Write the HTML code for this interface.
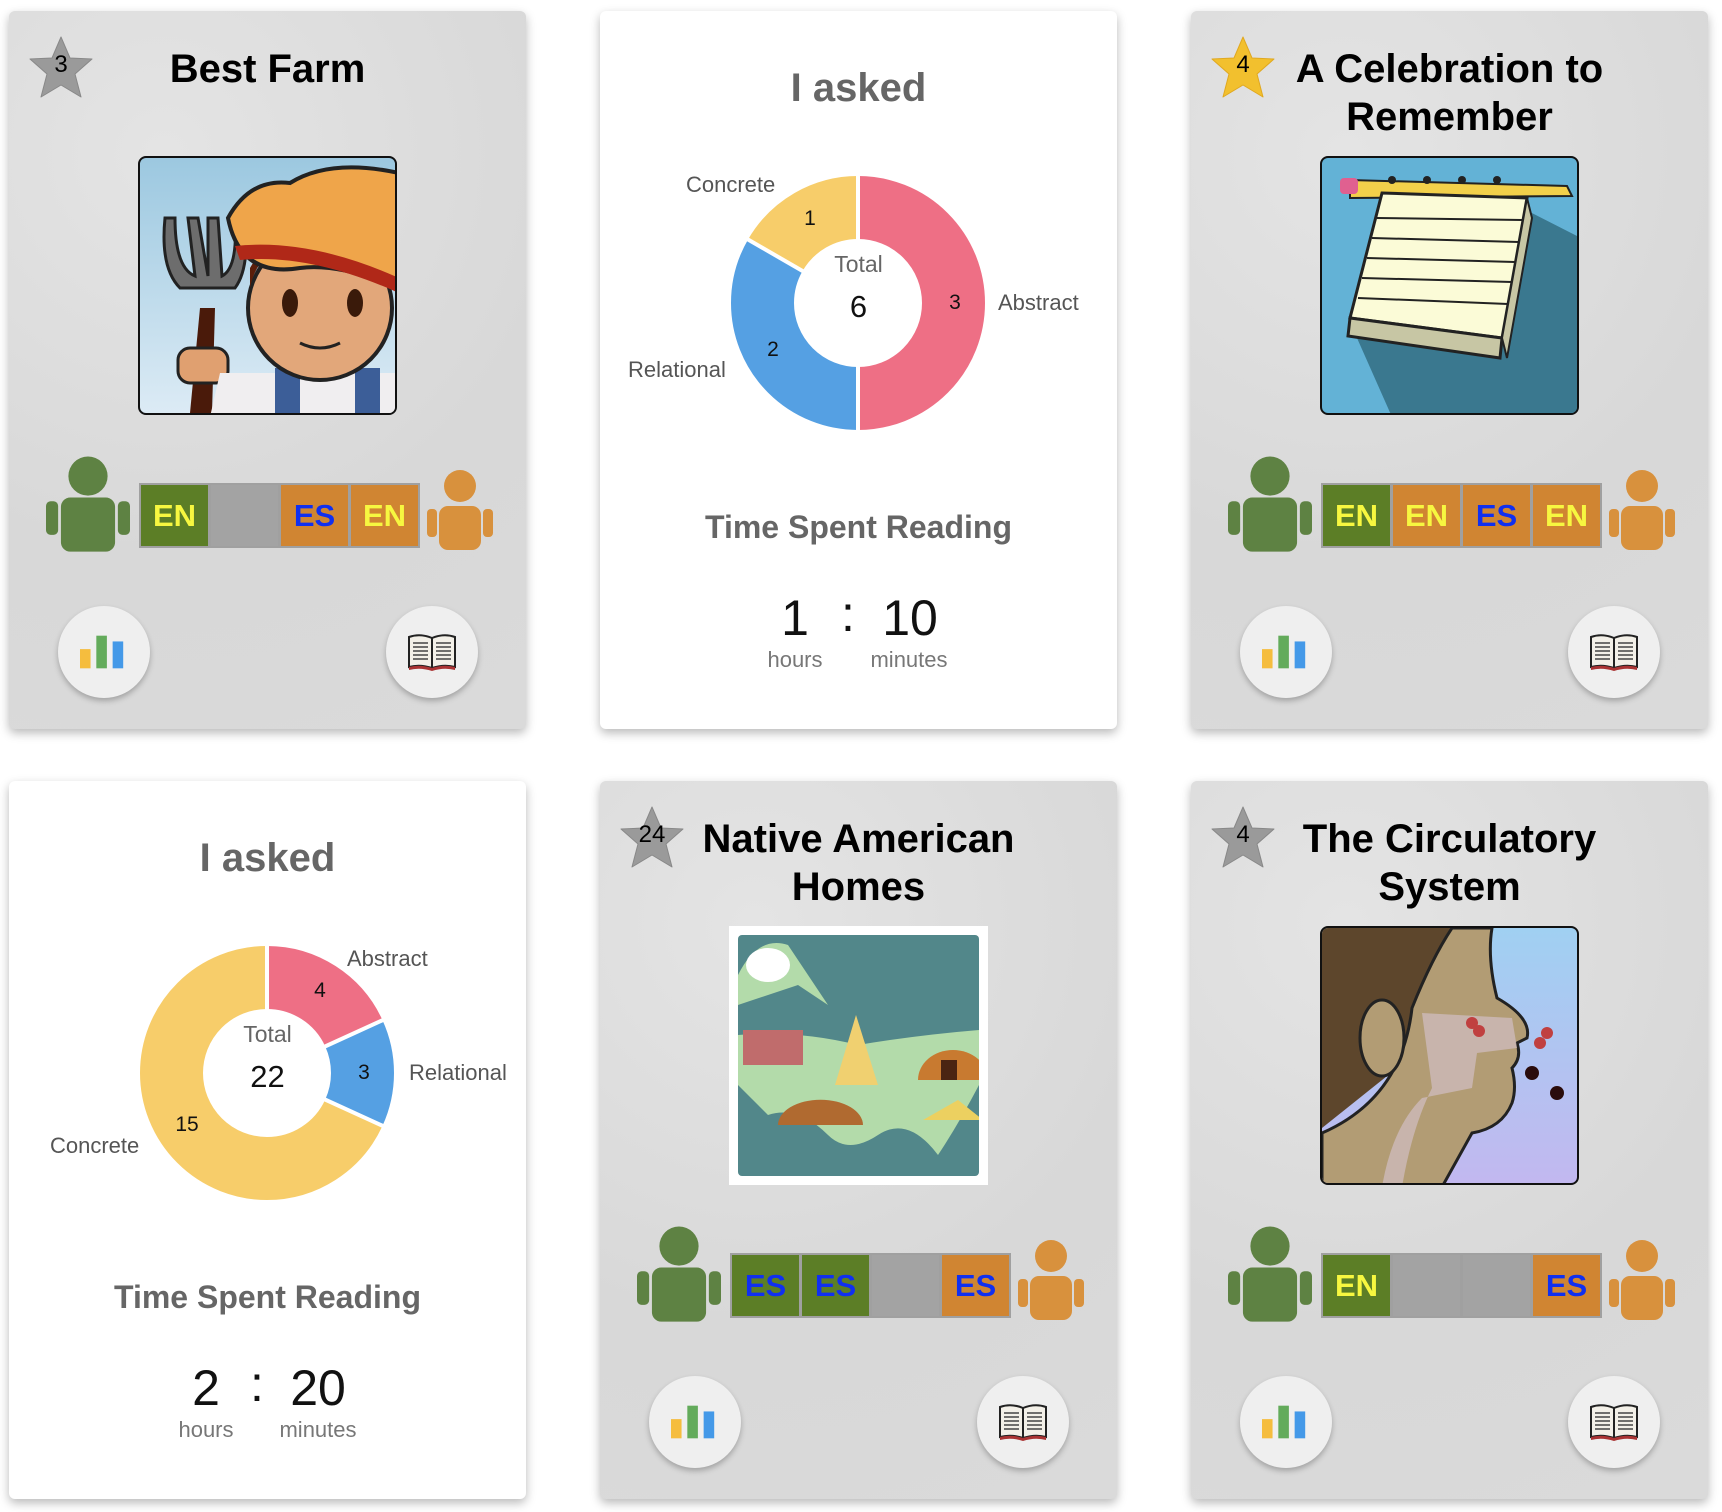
<!DOCTYPE html>
<html><head><meta charset="utf-8">
<style>
*{margin:0;padding:0;box-sizing:border-box}
body{width:1722px;height:1512px;background:#fff;position:relative;overflow:hidden;font-family:"Liberation Sans",Arial,sans-serif}
.card{position:absolute;width:517px;height:718px;border-radius:6px;box-shadow:0 4px 10px rgba(0,0,0,.28)}
.g{background:#dcdcdc;background-image:radial-gradient(circle at 30% 20%,#e4e4e4 0,#d8d8d8 60%,#dadada 100%)}
.w{background:#fff}
.star{position:absolute;left:19px;top:24px;width:66px;height:66px}
.title{position:absolute;left:0;width:517px;text-align:center;font-weight:bold;font-size:40px;color:#000;line-height:48px}
.img{position:absolute;left:129px;top:145px;width:259px;height:259px;border-radius:8px;overflow:hidden;border:2px solid #111}
.langs{position:absolute;left:130px;top:472px;display:flex;background:#a0a0a0;padding:2px;gap:3px}
.lb{width:67px;height:61px;font-weight:bold;font-size:31px;display:flex;align-items:center;justify-content:center}
.gr{background:#5c7e26}.or{background:#d08532}.gy{background:#a3a3a3}
.ye{color:#f7f740}.bl{color:#1030f0}
.pg{position:absolute;left:37px;top:444px}
.po{position:absolute;left:418px;top:459px}
.btn{position:absolute;top:595px;width:92px;height:92px;border-radius:50%;background:#efefef;box-shadow:0 3px 6px rgba(0,0,0,.25);display:flex;align-items:center;justify-content:center}
.h1{position:absolute;left:0;width:517px;text-align:center;top:55px;font-size:40px;font-weight:bold;color:#666}
.lbl{position:absolute;font-size:22px;color:#555;white-space:nowrap}
.num{position:absolute;font-size:21px;color:#111;transform:translate(-50%,-50%)}
.tsr{position:absolute;left:0;width:517px;text-align:center;top:498px;font-size:32px;font-weight:bold;color:#666}
.big{position:absolute;top:578px;font-size:50px;color:#111;transform:translateX(-50%)}
.sm{position:absolute;top:636px;font-size:22px;color:#777;transform:translateX(-50%)}
</style></head><body>

<svg width="0" height="0" style="position:absolute">
<defs>
<symbol id="pg" viewBox="0 0 90 104"><circle cx="45" cy="21" r="21" fill="#5e8243"/><rect x="16" y="44" width="58" height="58" rx="10" fill="#5e8243"/><rect x="0" y="48" width="13" height="36" rx="5" fill="#5e8243"/><rect x="77" y="48" width="13" height="36" rx="5" fill="#5e8243"/></symbol>
<symbol id="po" viewBox="0 0 66 80"><circle cx="33" cy="16" r="16" fill="#d8913d"/><rect x="12" y="36" width="42" height="44" rx="9" fill="#d8913d"/><rect x="0" y="39" width="10" height="28" rx="4" fill="#d8913d"/><rect x="56" y="39" width="10" height="28" rx="4" fill="#d8913d"/></symbol>
<symbol id="bars" viewBox="0 0 50 34"><rect x="0" y="14" width="11" height="20" fill="#f5bd3e"/><rect x="17" y="0" width="11" height="34" fill="#63ab5b"/><rect x="34" y="6" width="11" height="28" fill="#4499e8"/></symbol>
<symbol id="book" viewBox="0 0 50 38"><path d="M2 4 Q13 0 25 5 Q37 0 48 4 L48 34 Q37 31 25 35 Q13 31 2 34 Z" fill="#f3f0e8" stroke="#222" stroke-width="2"/><path d="M25 5 L25 35" stroke="#222" stroke-width="2"/><g stroke="#444" stroke-width="1.6"><path d="M6 10h15M6 14h15M6 18h15M6 22h15M6 26h15M29 10h15M29 14h15M29 18h15M29 22h15M29 26h15"/></g><path d="M2 34 Q13 31 25 35 Q37 31 48 34 L48 37 Q37 34 25 38 Q13 34 2 37Z" fill="#a33"/></symbol>
<symbol id="star" viewBox="0 0 66 66"><path d="M33 2 L42 23 L64 24 L47 39 L53 62 L33 50 L13 62 L19 39 L2 24 L24 23 Z" fill="#9a9a9a" stroke="#888" stroke-width="1" stroke-linejoin="round"/></symbol>
<symbol id="stary" viewBox="0 0 66 66"><path d="M33 2 L42 23 L64 24 L47 39 L53 62 L33 50 L13 62 L19 39 L2 24 L24 23 Z" fill="#f2c02e" stroke="#e0a820" stroke-width="1" stroke-linejoin="round"/></symbol>
</defs></svg>

<!-- Card 1 -->
<div class="card g" style="left:9px;top:11px">
  <svg class="star"><use href="#star"/></svg>
  <div style="position:absolute;left:19px;top:40px;width:66px;text-align:center;font-size:24px">3</div>
  <div class="title" style="top:34px">Best Farm</div>
  <div class="img" style="background:linear-gradient(#9cc8e0,#dcebf5)">
    <svg width="259" height="259" viewBox="0 0 259 259">
      <path d="M50 255 L60 150 L75 150 L72 255Z" fill="#4a1a0a"/>
      <path d="M25 60 Q20 110 40 130 L95 130 Q110 110 105 60 L95 60 Q98 110 82 118 L78 60 L68 60 L68 118 L58 60 L48 60 L55 118 Q35 110 35 60Z" fill="#6d6d6d" stroke="#222" stroke-width="3"/>
      <rect x="38" y="190" width="50" height="35" rx="12" fill="#e0a070" stroke="#222" stroke-width="3"/>
      <path d="M70 259 L80 215 L259 215 L259 259Z" fill="#f0eef0"/>
      <rect x="135" y="210" width="25" height="49" fill="#3c5e98"/><rect x="215" y="210" width="25" height="49" fill="#3c5e98"/>
      <circle cx="180" cy="150" r="72" fill="#e2a77a" stroke="#222" stroke-width="4"/>
      <path d="M110 130 Q120 80 180 85 L259 90 L259 60 Q150 40 110 110Z" fill="#5a1e0a"/>
      <ellipse cx="150" cy="145" rx="8" ry="14" fill="#3a1a0a"/><ellipse cx="215" cy="145" rx="8" ry="14" fill="#3a1a0a"/>
      <path d="M160 185 Q180 195 200 185" stroke="#222" stroke-width="3" fill="none"/>
      <path d="M88 60 Q110 20 150 25 Q190 0 259 15 L259 130 Q200 105 160 110 Q100 120 88 60Z" fill="#efa54a" stroke="#222" stroke-width="4"/>
      <path d="M95 88 Q170 80 259 120 L259 135 Q170 95 100 102Z" fill="#b02818"/>
    </svg>
  </div>
  <div class="langs"><div class="lb gr ye">EN</div><div class="lb gy"></div><div class="lb or bl">ES</div><div class="lb or ye">EN</div></div>
  <svg class="pg" width="84" height="100"><use href="#pg"/></svg>
  <svg class="po" width="66" height="80"><use href="#po"/></svg>
  <div class="btn" style="left:49px"><svg width="48" height="36"><use href="#bars"/></svg></div>
  <div class="btn" style="left:377px"><svg width="50" height="38"><use href="#book"/></svg></div>
</div>

<!-- Card 2 chart -->
<div class="card w" style="left:600px;top:11px">
  <div class="h1">I asked</div>
  <svg style="position:absolute;left:0;top:0" width="517" height="460">
    <g transform="translate(258,292) rotate(-90)">
      <circle r="95.5" fill="none" stroke="#ee6f85" stroke-width="63" stroke-dasharray="300 300.04"/>
      <circle r="95.5" fill="none" stroke="#55a0e3" stroke-width="63" stroke-dasharray="0 300 200 100.04"/>
      <circle r="95.5" fill="none" stroke="#f7cd6a" stroke-width="63" stroke-dasharray="0 500 100.04 0"/>
    </g>
    <g transform="translate(258,292)" stroke="#fff" stroke-width="4"><line x1="0" y1="0" x2="0" y2="-130"/><line x1="0" y1="0" x2="0" y2="130"/><line x1="0" y1="0" x2="-112.6" y2="-65"/></g>
    <circle cx="258" cy="292" r="63" fill="#fff"/>
  </svg>
  <div class="lbl" style="left:86px;top:161px">Concrete</div>
  <div class="lbl" style="left:398px;top:279px">Abstract</div>
  <div class="lbl" style="left:28px;top:346px">Relational</div>
  <div class="num" style="left:210px;top:208px">1</div>
  <div class="num" style="left:355px;top:292px">3</div>
  <div class="num" style="left:173px;top:339px">2</div>
  <div class="lbl" style="left:0;width:517px;text-align:center;top:240px;color:#666;font-size:23px">Total</div>
  <div class="lbl" style="left:0;width:517px;text-align:center;top:278px;color:#111;font-size:31px">6</div>
  <div class="tsr">Time Spent Reading</div>
  <div class="big" style="left:195px">1</div><div class="big" style="left:248px;top:574px">:</div><div class="big" style="left:310px">10</div>
  <div class="sm" style="left:195px">hours</div><div class="sm" style="left:309px">minutes</div>
</div>

<!-- Card 3 -->
<div class="card g" style="left:1191px;top:11px">
  <svg class="star"><use href="#stary"/></svg>
  <div style="position:absolute;left:19px;top:40px;width:66px;text-align:center;font-size:24px">4</div>
  <div class="title" style="top:34px">A Celebration to<br>Remember</div>
  <div class="img" style="background:#63b2d6">
    <svg width="259" height="259" viewBox="0 0 259 259">
      <path d="M35 180 L70 259 L259 259 L259 80 L200 50 L185 180Z" fill="#3a788f"/>
      <path d="M28 22 L245 28 L250 38 L28 40Z" fill="#f2d04a" stroke="#222" stroke-width="2"/>
      <rect x="18" y="20" width="18" height="16" rx="4" fill="#e06090"/>
      <path d="M60 35 L205 40 L180 180 L28 160Z" fill="#fbfbd7" stroke="#222" stroke-width="3"/>
      <path d="M28 160 L180 180 L178 200 L26 178Z" fill="#c7c6a4" stroke="#222" stroke-width="3"/>
      <path d="M205 40 L210 60 L185 200 L180 180Z" fill="#c7c6a4" stroke="#222" stroke-width="2"/>
      <g stroke="#222" stroke-width="2"><path d="M55 60 L200 62M50 80 L197 84M45 100 L193 104M40 120 L190 124M36 140 L186 146"/></g>
      <g fill="#222"><circle cx="70" cy="22" r="4"/><circle cx="105" cy="22" r="4"/><circle cx="140" cy="22" r="4"/><circle cx="175" cy="22" r="4"/></g>
    </svg>
  </div>
  <div class="langs"><div class="lb gr ye">EN</div><div class="lb or ye">EN</div><div class="lb or bl">ES</div><div class="lb or ye">EN</div></div>
  <svg class="pg" width="84" height="100"><use href="#pg"/></svg>
  <svg class="po" width="66" height="80"><use href="#po"/></svg>
  <div class="btn" style="left:49px"><svg width="48" height="36"><use href="#bars"/></svg></div>
  <div class="btn" style="left:377px"><svg width="50" height="38"><use href="#book"/></svg></div>
</div>

<!-- Card 4 chart -->
<div class="card w" style="left:9px;top:781px">
  <div class="h1">I asked</div>
  <svg style="position:absolute;left:0;top:0" width="517" height="460">
    <g transform="translate(258,292) rotate(-90)">
      <circle r="95.5" fill="none" stroke="#ee6f85" stroke-width="63" stroke-dasharray="109.1 490.94"/>
      <circle r="95.5" fill="none" stroke="#55a0e3" stroke-width="63" stroke-dasharray="0 109.1 81.8 409.14"/>
      <circle r="95.5" fill="none" stroke="#f7cd6a" stroke-width="63" stroke-dasharray="0 190.9 409.14 0"/>
    </g>
    <g transform="translate(258,292)" stroke="#fff" stroke-width="4"><line x1="0" y1="0" x2="0" y2="-130"/><line x1="0" y1="0" x2="118.2" y2="-54"/><line x1="0" y1="0" x2="118.2" y2="54"/></g>
    <circle cx="258" cy="292" r="63" fill="#fff"/>
  </svg>
  <div class="lbl" style="left:338px;top:165px">Abstract</div>
  <div class="lbl" style="left:400px;top:279px">Relational</div>
  <div class="lbl" style="left:41px;top:352px">Concrete</div>
  <div class="num" style="left:311px;top:210px">4</div>
  <div class="num" style="left:355px;top:292px">3</div>
  <div class="num" style="left:178px;top:344px">15</div>
  <div class="lbl" style="left:0;width:517px;text-align:center;top:240px;color:#666;font-size:23px">Total</div>
  <div class="lbl" style="left:0;width:517px;text-align:center;top:278px;color:#111;font-size:31px">22</div>
  <div class="tsr">Time Spent Reading</div>
  <div class="big" style="left:197px">2</div><div class="big" style="left:248px;top:574px">:</div><div class="big" style="left:309px">20</div>
  <div class="sm" style="left:197px">hours</div><div class="sm" style="left:309px">minutes</div>
</div>

<!-- Card 5 -->
<div class="card g" style="left:600px;top:781px">
  <svg class="star"><use href="#star"/></svg>
  <div style="position:absolute;left:19px;top:40px;width:66px;text-align:center;font-size:24px">24</div>
  <div class="title" style="top:34px">Native American<br>Homes</div>
  <div class="img" style="background:#fff;border:none;border-radius:0;padding:9px">
    <svg width="241" height="241" viewBox="0 0 241 241">
      <rect x="0" y="0" width="241" height="241" rx="4" fill="#52878a"/>
      <path d="M0 100 Q60 95 120 110 Q180 100 241 95 L241 150 Q220 190 200 220 Q170 180 140 200 Q110 220 90 200 Q60 170 30 180 Q10 160 0 150Z" fill="#b3dbaa"/>
      <path d="M0 40 Q20 0 50 10 Q70 40 90 70 L60 50 Q30 60 0 70Z" fill="#b3dbaa"/>
      <ellipse cx="30" cy="30" rx="22" ry="17" fill="#fff"/>
      <rect x="5" y="95" width="60" height="35" fill="#c06c6c"/>
      <path d="M118 80 L97 150 L140 150Z" fill="#f0d070"/>
      <path d="M180 145 A35 30 0 0 1 250 145Z" fill="#c87a30"/>
      <rect x="203" y="125" width="16" height="20" fill="#4a2412"/>
      <path d="M40 190 A42 25 0 0 1 125 190Z" fill="#b06a30"/>
      <path d="M185 185 L220 165 L245 185Z" fill="#ecd060"/>
    </svg>
  </div>
  <div class="langs"><div class="lb gr bl">ES</div><div class="lb gr bl">ES</div><div class="lb gy"></div><div class="lb or bl">ES</div></div>
  <svg class="pg" width="84" height="100"><use href="#pg"/></svg>
  <svg class="po" width="66" height="80"><use href="#po"/></svg>
  <div class="btn" style="left:49px"><svg width="48" height="36"><use href="#bars"/></svg></div>
  <div class="btn" style="left:377px"><svg width="50" height="38"><use href="#book"/></svg></div>
</div>

<!-- Card 6 -->
<div class="card g" style="left:1191px;top:781px">
  <svg class="star"><use href="#star"/></svg>
  <div style="position:absolute;left:19px;top:40px;width:66px;text-align:center;font-size:24px">4</div>
  <div class="title" style="top:34px">The Circulatory<br>System</div>
  <div class="img" style="background:linear-gradient(#a0d0f2,#c2b8f0)">
    <svg width="259" height="259" viewBox="0 0 259 259">
      <path d="M0 0 L165 0 L150 80 L0 200Z" fill="#5d462c"/>
      <path d="M130 0 L170 0 Q165 30 175 70 Q210 90 205 110 L195 115 Q200 130 190 140 Q195 160 190 175 Q180 200 150 205 L120 259 L0 259 L0 205 Q80 170 90 80 Q110 30 130 0Z" fill="#b29c74" stroke="#222" stroke-width="3"/>
      <path d="M100 85 L190 90 L195 120 L155 125 L150 160 L100 170 Q70 200 60 259 L80 259 Q90 200 110 160Z" fill="#cbb8b6" opacity=".85"/>
      <ellipse cx="60" cy="110" rx="22" ry="38" fill="#b29c74" stroke="#222" stroke-width="3"/>
      <g fill="#c04040"><circle cx="150" cy="95" r="6"/><circle cx="157" cy="103" r="6"/><circle cx="225" cy="105" r="6"/><circle cx="218" cy="115" r="6"/></g>
      <g fill="#2a0c0c"><circle cx="210" cy="145" r="7"/><circle cx="235" cy="165" r="7"/></g>
    </svg>
  </div>
  <div class="langs"><div class="lb gr ye">EN</div><div class="lb gy"></div><div class="lb gy"></div><div class="lb or bl">ES</div></div>
  <svg class="pg" width="84" height="100"><use href="#pg"/></svg>
  <svg class="po" width="66" height="80"><use href="#po"/></svg>
  <div class="btn" style="left:49px"><svg width="48" height="36"><use href="#bars"/></svg></div>
  <div class="btn" style="left:377px"><svg width="50" height="38"><use href="#book"/></svg></div>
</div>

</body></html>
